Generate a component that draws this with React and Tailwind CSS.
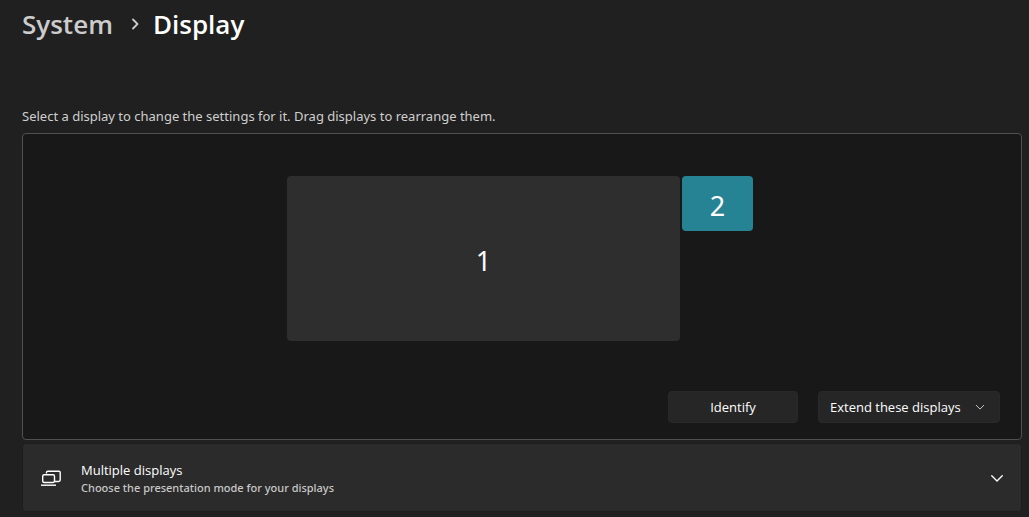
import { useState } from "react";

function Chevron({ className, direction = "down", strokeWidth = 1.2 }) {
  const d = direction === "down" ? "M1.5 4 6 8.5 10.5 4" : "M4 1.5 8.5 6 4 10.5";
  return (
    <svg
      viewBox="0 0 12 12"
      fill="none"
      stroke="currentColor"
      strokeWidth={strokeWidth}
      strokeLinecap="round"
      strokeLinejoin="round"
      aria-hidden="true"
      className={className}
    >
      <path d={d} />
    </svg>
  );
}

function MultipleDisplaysIcon() {
  return (
    <svg
      viewBox="0 0 20 18"
      fill="none"
      stroke="currentColor"
      strokeWidth="1.4"
      aria-hidden="true"
      className="h-[18px] w-5 shrink-0"
    >
      <path d="M5.5 4.5V3.5a1.3 1.3 0 0 1 1.3-1.3h11.1a1.3 1.3 0 0 1 1.3 1.3v7.2a1.8 1.8 0 0 1-1.8 1.8h-3.4" />
      <rect x="1.7" y="5.7" width="11.8" height="7.8" rx="1.5" />
      <path d="M0 16.2h15" />
    </svg>
  );
}

function Breadcrumb() {
  return (
    <nav aria-label="Breadcrumb" className="flex h-9 items-center text-[26px] leading-9 font-semibold">
      <a href="#system" className="text-[#cccccc]">
        System
      </a>
      <Chevron direction="right" strokeWidth={1.8} className="mr-3 ml-4 h-3 w-3 text-[#cccccc]" />
      <h1 className="text-white">Display</h1>
    </nav>
  );
}

export default function App() {
  const [selected, setSelected] = useState(2);
  const [mode, setMode] = useState("extend");
  const base = "rounded pt-1.5 font-['Noto_Sans','Open_Sans',sans-serif] text-[27px] text-white";
  const tone = (id) => (selected === id ? "bg-[#268393]" : "bg-[#2e2e2e]");

  return (
    <main className="min-h-screen bg-[#202020] pt-1.5 pr-[7px] pb-1.5 pl-[22px] font-['Open_Sans','Noto_Sans',sans-serif] text-[13px] text-white">
      <Breadcrumb />

      <p className="mt-16 font-['Noto_Sans','Open_Sans',sans-serif] leading-5 text-[#cfcfcf]">
        Select a display to change the settings for it. Drag displays to rearrange them.
      </p>

      <section
        aria-label="Display arrangement"
        className="mt-[7px] rounded border border-[#505050] bg-[#181818] px-[21px] pt-[42px] pb-4"
      >
        <div className="flex items-start justify-center gap-0.5 pr-1">
          <button
            type="button"
            aria-pressed={selected === 1}
            onClick={() => setSelected(1)}
            className={`${base} ${tone(1)} h-[165px] w-[393px]`}
          >
            1
          </button>
          <button
            type="button"
            aria-pressed={selected === 2}
            onClick={() => setSelected(2)}
            className={`${base} ${tone(2)} h-[55px] w-[71px]`}
          >
            2
          </button>
        </div>

        <div className="mt-[50px] flex justify-end gap-5">
          <button
            type="button"
            className="h-8 w-[130px] rounded border border-[#292929] bg-[#262626] pt-0.5 text-center"
          >
            Identify
          </button>
          <div className="relative">
            <select
              aria-label="Display mode"
              value={mode}
              onChange={(e) => setMode(e.target.value)}
              className="h-8 w-[182px] appearance-none rounded border border-[#292929] bg-[#262626] pt-0.5 pr-8 pl-[11px]"
            >
              <option value="duplicate">Duplicate these displays</option>
              <option value="extend">Extend these displays</option>
              <option value="only1">Show only on 1</option>
              <option value="only2">Show only on 2</option>
            </select>
            <Chevron className="pointer-events-none absolute top-[11px] right-[15px] h-[10px] w-[10px] text-[#c8c8c8]" />
          </div>
        </div>
      </section>

      <button
        type="button"
        aria-expanded="false"
        className="mt-[3px] flex h-[69px] w-full items-center rounded border border-[#1d1d1d] bg-[#2b2b2b] pr-[17px] pl-[18px] text-left"
      >
        <MultipleDisplaysIcon />
        <span className="ml-5 flex flex-1 flex-col">
          <span className="leading-5">Multiple displays</span>
          <span className="font-['Noto_Sans','Open_Sans',sans-serif] text-[11px] leading-4 font-medium text-[#c8c8c8]">
            Choose the presentation mode for your displays
          </span>
        </span>
        <Chevron strokeWidth={1.2} className="h-3.5 w-3.5 text-white" />
      </button>
    </main>
  );
}
